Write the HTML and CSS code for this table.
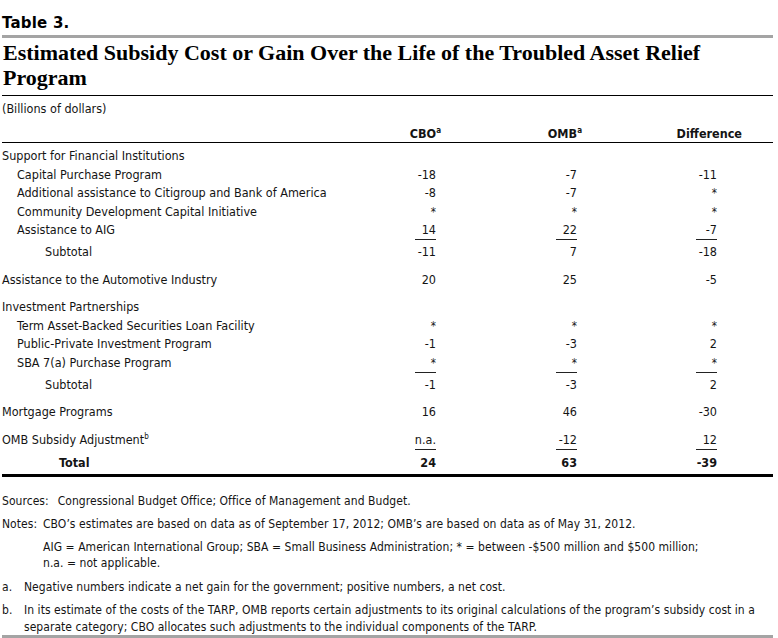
FILE: index.html
```html
<!DOCTYPE html>
<html>
<head>
<meta charset="utf-8">
<link rel="stylesheet" href="styles.css">
</head>
<body>
<div class="page">
  <div class="kicker">Table 3.</div>
  <div class="gray-rule"></div>
  <h1 class="title">Estimated Subsidy Cost or Gain Over the Life of the Troubled Asset Relief Program</h1>
  <div class="black-rule"></div>
  <div class="units">(Billions of dollars)</div>
  <div class="row head">
    <div></div>
    <div class="num"><span class="h">CBO<sup>a</sup></span></div>
    <div class="num"><span class="h">OMB<sup>a</sup></span></div>
    <div class="num"><span class="h diff">Difference</span></div>
  </div>
  <div class="black-rule thin"></div>

  <div class="row first"><div class="lab">Support for Financial Institutions</div></div>
  <div class="row"><div class="lab l1">Capital Purchase Program</div><div class="num">-18</div><div class="num">-7</div><div class="num">-11</div></div>
  <div class="row"><div class="lab l1">Additional assistance to Citigroup and Bank of America</div><div class="num">-8</div><div class="num">-7</div><div class="num star">*</div></div>
  <div class="row"><div class="lab l1">Community Development Capital Initiative</div><div class="num star">*</div><div class="num star">*</div><div class="num star">*</div></div>
  <div class="row"><div class="lab l1">Assistance to AIG</div><div class="num"><span class="ul">14</span></div><div class="num"><span class="ul">22</span></div><div class="num"><span class="ul">-7</span></div></div>
  <div class="row sub"><div class="lab l2">Subtotal</div><div class="num">-11</div><div class="num">7</div><div class="num">-18</div></div>

  <div class="row group"><div class="lab">Assistance to the Automotive Industry</div><div class="num">20</div><div class="num">25</div><div class="num">-5</div></div>

  <div class="row group"><div class="lab">Investment Partnerships</div></div>
  <div class="row"><div class="lab l1">Term Asset-Backed Securities Loan Facility</div><div class="num star">*</div><div class="num star">*</div><div class="num star">*</div></div>
  <div class="row"><div class="lab l1">Public-Private Investment Program</div><div class="num">-1</div><div class="num">-3</div><div class="num">2</div></div>
  <div class="row"><div class="lab l1">SBA 7(a) Purchase Program</div><div class="num star"><span class="ul">*</span></div><div class="num star"><span class="ul">*</span></div><div class="num star"><span class="ul">*</span></div></div>
  <div class="row sub"><div class="lab l2">Subtotal</div><div class="num">-1</div><div class="num">-3</div><div class="num">2</div></div>

  <div class="row group"><div class="lab">Mortgage Programs</div><div class="num">16</div><div class="num">46</div><div class="num">-30</div></div>

  <div class="row group"><div class="lab">OMB Subsidy Adjustment<sup>b</sup></div><div class="num"><span class="ul">n.a.</span></div><div class="num"><span class="ul">-12</span></div><div class="num"><span class="ul">12</span></div></div>
  <div class="row total"><div class="lab l3">Total</div><div class="num">24</div><div class="num">63</div><div class="num">-39</div></div>
  <div class="thick-rule"></div>

  <div class="notes">
    <p class="src"><span class="src-label">Sources:</span>Congressional Budget Office; Office of Management and Budget.</p>
    <div class="note-grid">
      <span class="note-label">Notes:</span>
      <p>CBO’s estimates are based on data as of September 17, 2012; OMB’s are based on data as of May 31, 2012.</p>
      <span></span>
      <p>AIG = American International Group; SBA = Small Business Administration; * = between -$500 million and $500 million;<br>n.a. = not applicable.</p>
    </div>
    <div class="fn-grid">
      <span>a.</span>
      <p>Negative numbers indicate a net gain for the government; positive numbers, a net cost.</p>
      <span>b.</span>
      <p>In its estimate of the costs of the TARP, OMB reports certain adjustments to its original calculations of the program’s subsidy cost in a<br>separate category; CBO allocates such adjustments to the individual components of the TARP.</p>
    </div>
  </div>
  <div class="gray-rule bottom"></div>
</div>
</body>
</html>
```

FILE: styles.css
```css
html, body {
  margin: 0;
  padding: 0;
  background: #fff;
}

.page {
  width: 771px;
  margin-left: 2px;
  color: #141414;
  font-family: "DejaVu Sans Condensed", "DejaVu Sans", sans-serif;
  font-size: 12.5px;
}

.kicker {
  font-family: "DejaVu Sans", sans-serif;
  font-weight: bold;
  font-size: 15px;
  line-height: 18px;
  padding-top: 14px;
  color: #000;
  letter-spacing: 0.2px;
}

.gray-rule {
  height: 3px;
  background: #a4a4a4;
  margin-top: 3px;
}

.title {
  font-family: "Liberation Serif", serif;
  font-weight: bold;
  font-size: 22px;
  line-height: 24.5px;
  margin: 3px 0 0 1px;
  color: #000;
  width: 730px;
}

.black-rule {
  height: 1px;
  background: #000;
  margin-top: 5px;
}

.black-rule.thin {
  margin-top: 0;
}

.units {
  line-height: 18px;
  margin-top: 4px;
}

.row {
  display: grid;
  grid-template-columns: 344px 90px 141px 140px 1fr;
  line-height: 18.5px;
}

.row.head {
  margin-top: 8px;
  line-height: 16px;
  font-weight: bold;
}

.h {
  display: inline-block;
}

.h sup {
  font-size: 8px;
  line-height: 0;
  vertical-align: 5px;
  margin-right: -5px;
}

.h.diff {
  margin-right: -25px;
}

.row.first {
  margin-top: 4px;
}

.row.sub {
  margin-top: 3px;
}

.row.group {
  margin-top: 9px;
}

.row.total {
  margin-top: 4px;
  font-weight: bold;
}

.lab {
  white-space: nowrap;
}

.lab sup {
  font-size: 8px;
  line-height: 0;
  vertical-align: 5px;
}

.l1 { padding-left: 15px; }
.l2 { padding-left: 43px; }
.l3 { padding-left: 57px; }

.num {
  text-align: right;
}

.star {
  font-size: 11.5px;
}

.ul {
  display: inline-block;
  min-width: 21px;
  text-align: right;
  border-bottom: 1px solid #222;
  line-height: 18px;
}

.thick-rule {
  height: 3px;
  background: #000;
  margin-top: 2px;
}

.notes {
  margin-top: 16px;
  font-size: 12px;
  letter-spacing: 0.05px;
  line-height: 16.5px;
}

.notes p {
  margin: 0;
}

.src-label {
  margin-right: 9px;
}

.note-grid {
  display: grid;
  grid-template-columns: 41px 1fr;
  row-gap: 6px;
  margin-top: 6.5px;
}

.fn-grid {
  display: grid;
  grid-template-columns: 22px 1fr;
  row-gap: 6.5px;
  margin-top: 7.5px;
}

.gray-rule.bottom {
  margin-top: 0;
}
```
